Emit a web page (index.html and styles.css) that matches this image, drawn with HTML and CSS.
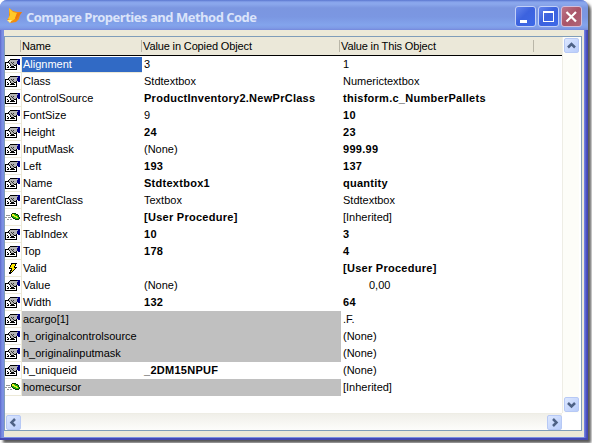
FILE: index.html
```html
<!DOCTYPE html>
<html lang="en">
<head>
<meta charset="utf-8">
<title>Compare Properties and Method Code</title>
<link rel="stylesheet" href="styles.css">
</head>
<body>
<svg class="defs" aria-hidden="true">
  <symbol id="prop" viewBox="0 0 15 12">
    <path d="M0 3H12V11H0Z" fill="#000"/>
    <path d="M1 4H11V10H1Z" fill="#fff"/>
    <path d="M5 0H12V1H5ZM4 1H5V2H4ZM3 2H4V4H3ZM4 4H6V5H4ZM11 5H12V6H11ZM9 6H11V7H9ZM5 6H6V7H5ZM6 7H9V8H6Z" fill="#000"/>
    <path d="M5 1H12V5H11V6H9V7H6V5H5V4H4V2H5Z" fill="#b4b4b4"/>
    <path d="M6 3H7V4H6ZM7 4H8V5H7ZM8 5H9V6H8ZM8 3H9V4H8ZM5 5H6V6H5Z" fill="#333"/>
    <path d="M2 6H3V7H2ZM3 7H4V8H3ZM2 8H4V9H2ZM5 8H10V9H5Z" fill="#000"/>
    <path d="M12 0H15V6H13V5H12Z" fill="#000080"/><path d="M12 1H13V2H12Z" fill="#aab"/>
  </symbol>
  <symbol id="method" viewBox="0 0 15 12">
    <path d="M1 3H5V4H1ZM0 5H2V6H0ZM3 5H6V6H3ZM2 7H4V8H2ZM5 7H7V8H5Z" fill="#999"/>
    <path d="M7 1H11V2H13V3H14V5H15V7H14V8H10V7H8V6H7V5H6V2H7Z" fill="#063b00"/>
    <path d="M7 2H11V3H13V5H14V7H10V6H8V5H7Z" fill="#20b010"/>
    <path d="M7 2H9V3H10V4H12V5H13V6H11V5H9V4H7Z" fill="#e8f020"/>
  </symbol>
  <symbol id="event" viewBox="0 0 15 12">
    <path d="M6 0H12V1H11V3H10V4H12V5H11V6H10V7H9V8H8V9H7V10H6V11H4V9H5V7H6V6H4V4H5V2H6Z" fill="#000"/>
    <path d="M7 1H10V3H9V5H10V6H9V7H8V8H7V9H6V8H7V5H5V4H6V2H7Z" fill="#ffeb00"/>
  </symbol>
</svg>
<div class="window">
  <header class="titlebar">
    <svg class="fox" viewBox="0 0 16 16">
      <path d="M2 0 6 3 10 4 15 4 13 7 12 11 9 14 3 15 0 12 2 9Z" fill="#f28c0c"/>
      <path d="M2 0 6 4 10 5 9 10 5 13 1 11 3 7Z" fill="#ffc928"/>
      <path d="M10 5 15 4 12 8 9 12 8 10Z" fill="#ee7812"/>
      <path d="M0 12 5 12 3 15Z" fill="#fff0a0"/>
    </svg>
    <h1>Compare Properties and Method Code</h1>
    <div class="buttons">
      <i class="btn"><svg viewBox="0 0 19 19"><path d="M4 13H11V16H4Z" fill="#fff"/></svg></i>
      <i class="btn"><svg viewBox="0 0 19 19"><path d="M4 4H15V15H4ZM5 6V14H14V6Z" fill="#fff" fill-rule="evenodd"/></svg></i>
      <i class="btn close"><svg viewBox="0 0 19 19"><path d="M4.5 5 14 14.5M14 5 4.5 14.5" stroke="#fff" stroke-width="2.2"/></svg></i>
    </div>
  </header>
  <main class="client">
    <div class="grid">
      <div class="list">
        <div class="head"><span></span><span>Name</span><span>Value in Copied Object</span><span>Value in This Object</span></div>
        <div class="rows" id="rows"></div>
      </div>
      <div class="vbar">
        <b class="arrow"><svg viewBox="0 0 13 13"><path d="M3 8.5 6.5 5 10 8.5"/></svg></b>
        <b class="arrow"><svg viewBox="0 0 13 13"><path d="M3 5 6.5 8.5 10 5"/></svg></b>
      </div>
      <div class="hbar">
        <b class="arrow"><svg viewBox="0 0 13 13"><path d="M8 3 4.5 6.5 8 10"/></svg></b>
        <b class="arrow"><svg viewBox="0 0 13 13"><path d="M5 3 8.5 6.5 5 10"/></svg></b>
      </div>
      <div class="corner"></div>
    </div>
  </main>
</div>
<script src="rows.js"></script>
</body>
</html>
```
FILE: rows.js
```js
// icon, name, copied value, this value, flags (a/b: bold value columns, g: grey, s: selected, n: numeric)
const data = [
  ['prop', 'Alignment', '3', '1', 's'],
  ['prop', 'Class', 'Stdtextbox', 'Numerictextbox', ''],
  ['prop', 'ControlSource', 'ProductInventory2.NewPrClass', 'thisform.c_NumberPallets', 'ab'],
  ['prop', 'FontSize', '9', '10', 'b'],
  ['prop', 'Height', '24', '23', 'ab'],
  ['prop', 'InputMask', '(None)', '999.99', 'b'],
  ['prop', 'Left', '193', '137', 'ab'],
  ['prop', 'Name', 'Stdtextbox1', 'quantity', 'ab'],
  ['prop', 'ParentClass', 'Textbox', 'Stdtextbox', ''],
  ['method', 'Refresh', '[User Procedure]', '[Inherited]', 'a'],
  ['prop', 'TabIndex', '10', '3', 'ab'],
  ['prop', 'Top', '178', '4', 'ab'],
  ['event', 'Valid', '', '[User Procedure]', 'b'],
  ['prop', 'Value', '(None)', '0,00', 'n'],
  ['prop', 'Width', '132', '64', 'ab'],
  ['prop', 'acargo[1]', '', '.F.', 'g'],
  ['prop', 'h_originalcontrolsource', '', '(None)', 'g'],
  ['prop', 'h_originalinputmask', '', '(None)', 'g'],
  ['prop', 'h_uniqueid', '_2DM15NPUF', '(None)', 'a'],
  ['method', 'homecursor', '', '[Inherited]', 'g']
];
document.getElementById('rows').innerHTML = data.map(([icon, name, a, b, f]) => {
  const has = c => f.includes(c);
  return `<div class="row${has('g') ? ' grey' : ''}${has('s') ? ' selected' : ''}">` +
    `<span class="icon"><svg><use href="#${icon}"/></svg></span>` +
    `<span class="name">${name}</span>` +
    `<span class="${has('a') ? 'bold' : ''}">${a}</span>` +
    `<span class="${has('b') ? 'bold' : ''}${has('n') ? 'numeric' : ''}">${b}</span></div>`;
}).join('');
```
FILE: styles.css
```css
* { box-sizing: border-box; }
body {
  margin: 0; width: 592px; height: 443px; overflow: hidden; background: #fff;
  font: 11px/17px "Liberation Sans", Arial, sans-serif; color: #000;
}
.defs { position: absolute; width: 0; height: 0; }
.window {
  width: 588px; height: 440px; display: flex; flex-direction: column;
  border-radius: 7px 7px 0 0;
  background: linear-gradient(90deg, #5b65cc 0, #7b8fe2 2px, #7b8fe2 584px, #6570d8 585px, #4347b5 587px);
  border-bottom: 2px solid #4448b4;
  box-shadow: 3px 3px 3px #555;
}
.titlebar {
  height: 30px; flex: none; display: flex; align-items: center; padding: 0 6px 0 7px;
  border-radius: 7px 7px 0 0;
  background: linear-gradient(#5a76cf 0, #88a4eb 2px, #8ba8ec 4px, #7b96e0 8px, #7b97e2 17px, #83a4ec 25px, #7f9be6 28px, #7588dc 30px);
}
.fox { width: 16px; height: 16px; margin-top: 2px; }
h1 {
  flex: 1; margin: 3px 0 0 3px; color: #dbe4fa; white-space: nowrap;
  font: bold 13px/18px "Open Sans", sans-serif; letter-spacing: -.49px;
}
.buttons { display: flex; gap: 2px; margin-top: 3px; }
.btn {
  width: 21px; height: 21px; border: 1px solid #c2d0f8; border-radius: 3px;
  background: linear-gradient(135deg, #6485ec, #3c62de 45%, #3d69e8);
}
.btn svg { display: block; width: 19px; height: 19px; }
.close { background: linear-gradient(135deg, #bd7488, #a95468 50%, #b16578); border-color: #d5bdd8; }
.client { flex: 1; margin: 0 4px 1px; padding: 6px 2px 4px 0; background: #ece9d8; }
.grid {
  height: 395px; border: 1px solid #7f9db9; background: #fff;
  display: grid; grid-template: 376px 17px / 557px 17px;
}
.head {
  height: 19px; display: grid; grid-template-columns: 16px 121px 198px 194px 28px;
  background: #ebe8d9; border-bottom: 1px solid #000;
  white-space: nowrap; letter-spacing: -.13px;
}
.head span { border-right: 1px solid #b9b6a8; height: 12px; margin-top: 3px; padding-left: 1px; line-height: 13px; }
.row {
  height: 17px; display: grid; grid-template-columns: 17px 120px 199px 221px; white-space: nowrap;
}
.row span { padding-left: 2px; }
.row .icon { padding: 3px 0 0; border-right: 1px solid #ece9d8; border-bottom: 1px solid #ece9d8; }
.icon svg { display: block; width: 15px; height: 12px; }
.row .name { padding-left: 1px; }
.row .bold { font-weight: bold; letter-spacing: .27px; }
.row .numeric { padding-left: 28px; }
.selected .name { background: #316ac5; color: #fff; box-shadow: inset 0 -1px #ece9d8; margin-top: 1px; line-height: 15px; }
.grey { background: linear-gradient(90deg, transparent 17px, #c0c0c0 17px, #c0c0c0 336px, transparent 336px); }
.grey .icon { background: #fff; }
.vbar {
  display: flex; flex-direction: column; justify-content: space-between; align-items: center;
  background: #fdfdf8; border-left: 1px solid #eeede5; padding: 1px 0;
}
.hbar {
  display: flex; justify-content: space-between; align-items: center;
  background: linear-gradient(#f0efe9, #fdfdfb); border-top: 1px solid #eeede5; padding: 0 0 0 1px;
}
.arrow {
  width: 15px; height: 15px; border: 1px solid #b7c9f5; border-radius: 2px;
  background: linear-gradient(135deg, #dce7ff, #b9cdfb); display: block;
}
.arrow svg { display: block; width: 13px; height: 13px; }
.arrow path { fill: none; stroke: #4d6185; stroke-width: 2.5; }
```
